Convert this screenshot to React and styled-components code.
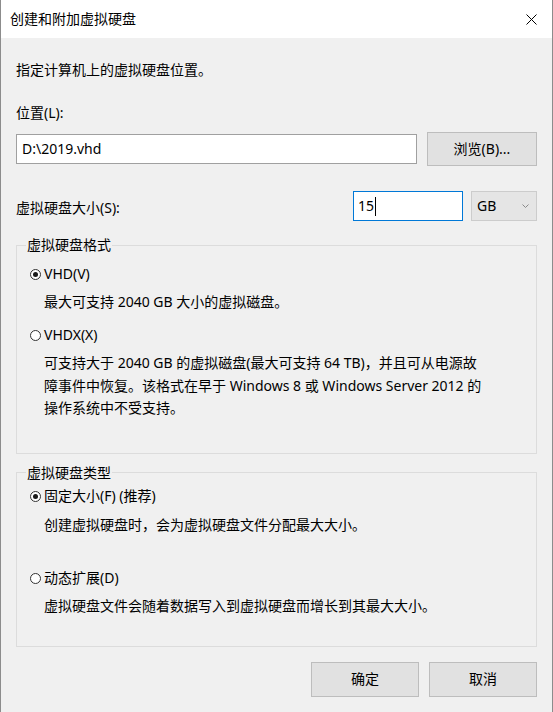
import React from "react";
import styled, { createGlobalStyle } from "styled-components";

// Styles de base de la page
const GlobalStyle = createGlobalStyle`
  html, body {
    margin: 0;
    padding: 0;
    background: #f0f0f0;
  }
  body {
    font-family: "Noto Sans", "Noto Sans CJK SC", sans-serif;
    font-size: 14px;
    color: #000;
  }
`;

// Fenêtre principale
const Window = styled.div`
  width: 553px;
  height: 712px;
  box-sizing: border-box;
  border-left: 1px solid #8c8c8c;
  border-right: 1px solid #8c8c8c;
  background: #f0f0f0;
  display: flex;
  flex-direction: column;
`;

// Barre de titre
const TitleBar = styled.div`
  height: 38px;
  flex-shrink: 0;
  background: #fff;
  display: flex;
  align-items: center;
  justify-content: space-between;
  padding-left: 9px;
`;

const TitleText = styled.span`
  line-height: 20px;
`;

const CloseButton = styled.div`
  width: 42px;
  height: 38px;
  display: flex;
  align-items: center;
  justify-content: center;
`;

// Contenu
const Body = styled.div`
  padding: 22px 15px 0 15px;
  display: flex;
  flex-direction: column;
`;

const Prompt = styled.p`
  margin: 0;
  line-height: 20px;
`;

const FieldLabel = styled.div`
  margin-top: 23px;
  line-height: 20px;
`;

const PathRow = styled.div`
  margin-top: 9px;
  height: 34px;
  display: flex;
  align-items: center;
  gap: 10px;
`;

const TextBox = styled.div`
  box-sizing: border-box;
  height: 30px;
  width: ${(p) => (p.$width ? `${p.$width}px` : "auto")};
  flex: ${(p) => (p.$width ? "0 0 auto" : "1")};
  background: #fff;
  border: 1px solid ${(p) => (p.$focused ? "#0078d7" : "#a0a0a0")};
  padding-left: ${(p) => (p.$focused ? 4 : 5)}px;
  display: flex;
  align-items: center;
  line-height: 20px;
`;

const Caret = styled.span`
  display: inline-block;
  width: 1px;
  height: 19px;
  background: #000;
  margin-left: 1px;
`;

const PushButton = styled.button`
  box-sizing: border-box;
  width: ${(p) => p.$width}px;
  height: ${(p) => p.$height}px;
  background: #e1e1e1;
  border: 1px solid #bdbdbd;
  font: inherit;
  color: #000;
  line-height: 20px;
  padding: 0;
`;

const SizeRow = styled.div`
  margin-top: 25px;
  height: 30px;
  display: flex;
  align-items: center;
`;

const SizeLabel = styled.span`
  flex: 1;
  line-height: 20px;
  margin-top: 4px;
`;

const Combo = styled.div`
  box-sizing: border-box;
  width: 66px;
  height: 30px;
  margin-left: 8px;
  background: #e5e5e5;
  border: 1px solid #cccccc;
  display: flex;
  align-items: center;
  justify-content: space-between;
  padding: 0 7px 0 5px;
  line-height: 20px;
`;

// Cadre de groupe
const Group = styled.fieldset`
  margin: ${(p) => p.$top}px 0 0 0;
  padding: 0 0 ${(p) => p.$bottom}px 0;
  border: 1px solid #dcdcdc;
  min-width: 0;
`;

const GroupLegend = styled.legend`
  margin-left: 9px;
  padding: 0 1px;
  line-height: 20px;
`;

const GroupBody = styled.div`
  padding-left: 13px;
  display: flex;
  flex-direction: column;
`;

const RadioRow = styled.div`
  margin-top: ${(p) => p.$top}px;
  height: 20px;
  display: flex;
  align-items: center;
  gap: 3px;
`;

const RadioMark = styled.span`
  box-sizing: border-box;
  width: 11px;
  height: 11px;
  border-radius: 50%;
  border: 1px solid #333;
  background: #fff;
  display: flex;
  align-items: center;
  justify-content: center;
  margin-top: 1px;

  &::after {
    content: "";
    width: 5px;
    height: 5px;
    border-radius: 50%;
    background: ${(p) => (p.$checked ? "#1a1a1a" : "transparent")};
  }
`;

const RadioLabel = styled.span`
  line-height: 20px;
`;

const Note = styled.p`
  margin: ${(p) => p.$top}px 0 0 0;
  padding-left: 14px;
  line-height: ${(p) => p.$lh || 20}px;
  white-space: nowrap;
`;

const Footer = styled.div`
  margin-top: 15px;
  display: flex;
  justify-content: flex-end;
  gap: 10px;
`;

const CloseIcon = () => (
  <svg width="11" height="11" viewBox="0 0 11 11">
    <path d="M0.5 0.5 L10.5 10.5 M10.5 0.5 L0.5 10.5" stroke="#000" strokeWidth="1" fill="none" />
  </svg>
);

const Chevron = () => (
  <svg width="7" height="4" viewBox="0 0 7 4">
    <path d="M0.5 0.5 L3.5 3.5 L6.5 0.5" stroke="#8a8a8a" strokeWidth="1" fill="none" />
  </svg>
);

const Radio = ({ checked, label, top }) => (
  <RadioRow $top={top}>
    <RadioMark $checked={checked} />
    <RadioLabel>{label}</RadioLabel>
  </RadioRow>
);

const App = () => {
  return (
    <>
      <GlobalStyle />
      <Window>
        <TitleBar>
          <TitleText>创建和附加虚拟硬盘</TitleText>
          <CloseButton>
            <CloseIcon />
          </CloseButton>
        </TitleBar>
        <Body>
          <Prompt>指定计算机上的虚拟硬盘位置。</Prompt>
          <FieldLabel>位置(L):</FieldLabel>
          <PathRow>
            <TextBox>D:\2019.vhd</TextBox>
            <PushButton $width={110} $height={34}>浏览(B)...</PushButton>
          </PathRow>
          <SizeRow>
            <SizeLabel>虚拟硬盘大小(S):</SizeLabel>
            <TextBox $focused $width={110}>
              15
              <Caret />
            </TextBox>
            <Combo>
              <span>GB</span>
              <Chevron />
            </Combo>
          </SizeRow>

          <Group $top={14} $bottom={33}>
            <GroupLegend>虚拟硬盘格式</GroupLegend>
            <GroupBody>
              <Radio checked label="VHD(V)" top={9} />
              <Note $top={8}>最大可支持 2040 GB 大小的虚拟磁盘。</Note>
              <Radio label="VHDX(X)" top={13} />
              <Note $top={7} $lh={22.5}>
                可支持大于 2040 GB 的虚拟磁盘(最大可支持 64 TB)，并且可从电源故
                <br />
                障事件中恢复。该格式在早于 Windows 8 或 Windows Server 2012 的
                <br />
                操作系统中不受支持。
              </Note>
            </GroupBody>
          </Group>

          <Group $top={9} $bottom={30}>
            <GroupLegend>虚拟硬盘类型</GroupLegend>
            <GroupBody>
              <Radio checked label="固定大小(F) (推荐)" top={3} />
              <Note $top={9}>创建虚拟硬盘时，会为虚拟硬盘文件分配最大大小。</Note>
              <Radio label="动态扩展(D)" top={33} />
              <Note $top={8}>虚拟硬盘文件会随着数据写入到虚拟硬盘而增长到其最大大小。</Note>
            </GroupBody>
          </Group>

          <Footer>
            <PushButton $width={108} $height={35}>确定</PushButton>
            <PushButton $width={108} $height={35}>取消</PushButton>
          </Footer>
        </Body>
      </Window>
    </>
  );
};

export default App;
